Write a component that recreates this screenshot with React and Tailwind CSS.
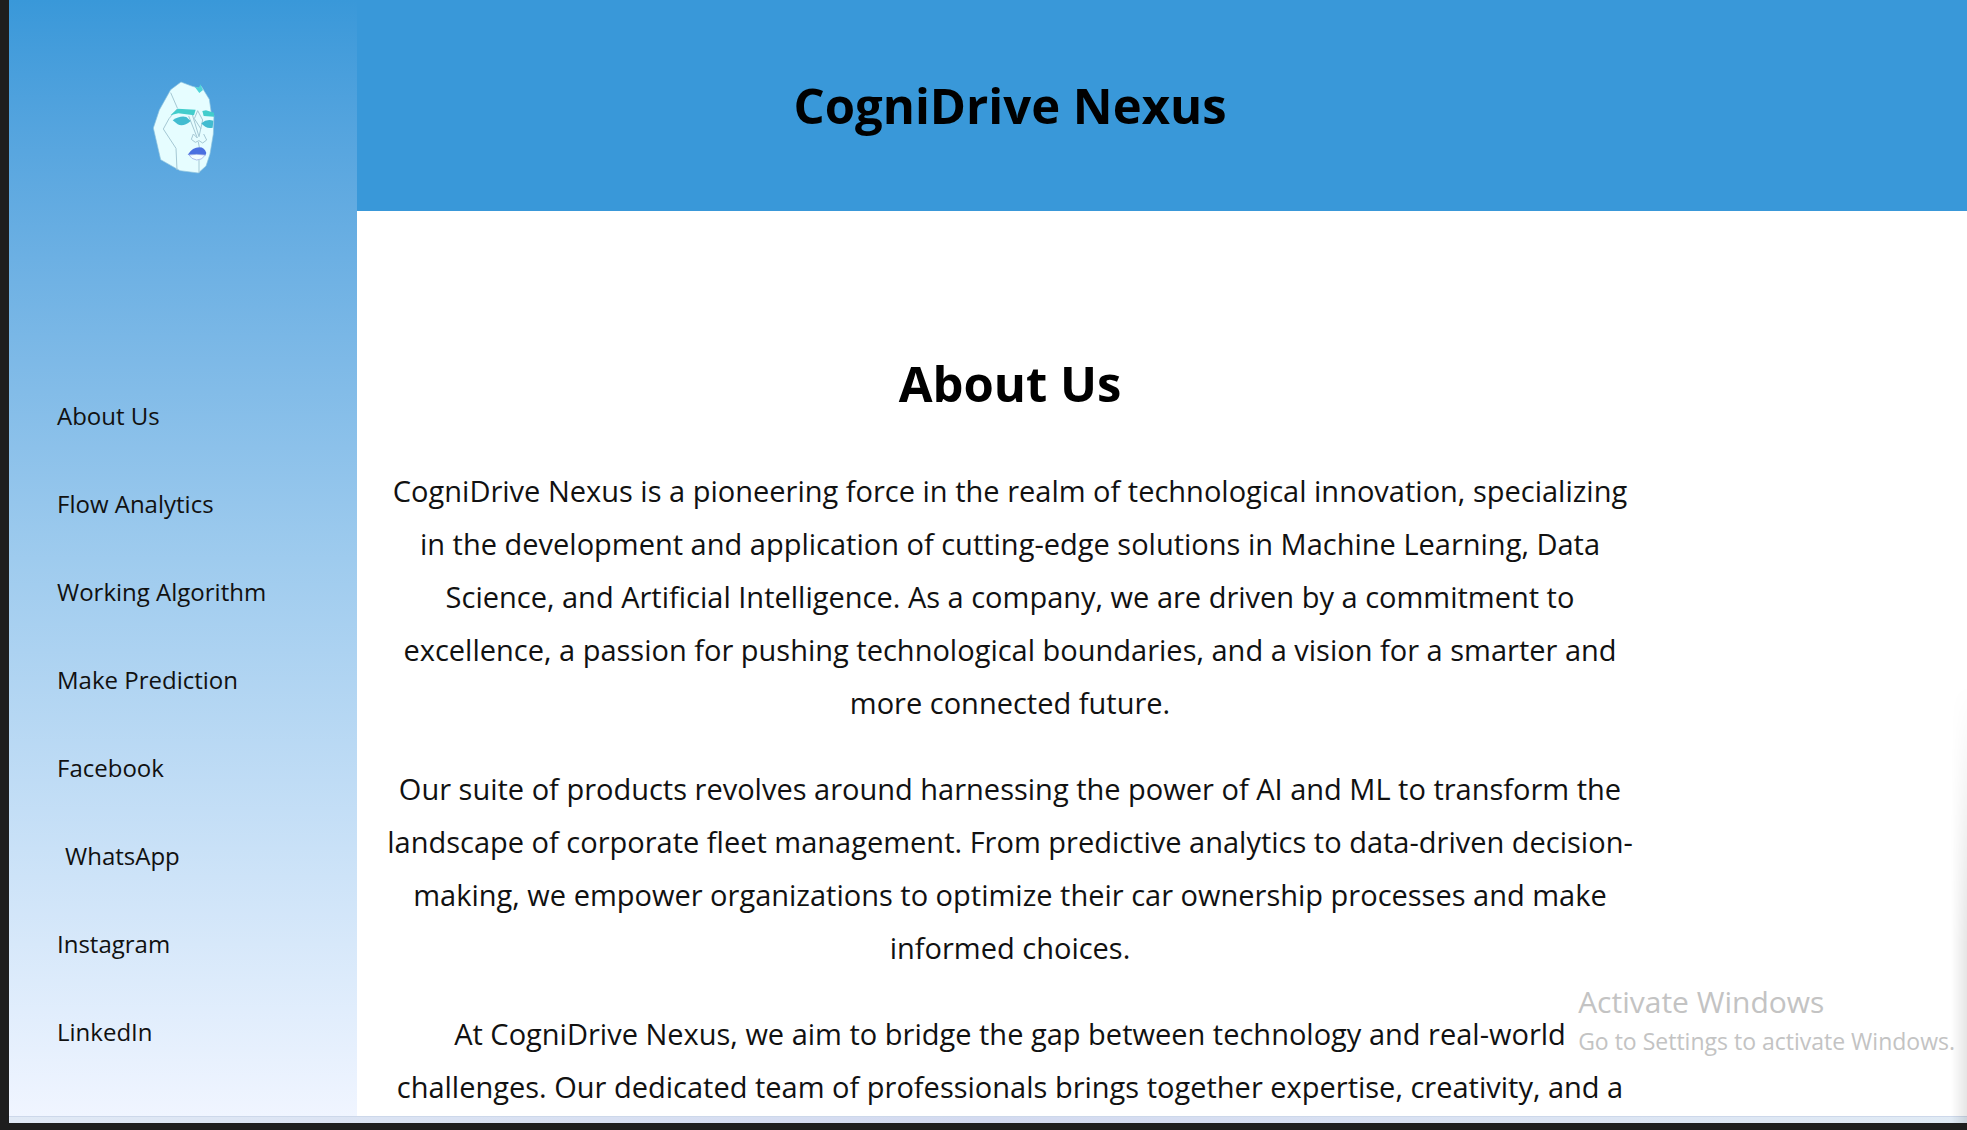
const links = [
  { label: "About Us" },
  { label: "Flow Analytics" },
  { label: "Working Algorithm" },
  { label: "Make Prediction" },
  { label: "Facebook" },
  { label: "WhatsApp", indent: true },
  { label: "Instagram" },
  { label: "LinkedIn" },
];

const paragraphs = [
  "CogniDrive Nexus is a pioneering force in the realm of technological innovation, specializing in the development and application of cutting-edge solutions in Machine Learning, Data Science, and Artificial Intelligence. As a company, we are driven by a commitment to excellence, a passion for pushing technological boundaries, and a vision for a smarter and more connected future.",
  "Our suite of products revolves around harnessing the power of AI and ML to transform the landscape of corporate fleet management. From predictive analytics to data-driven decision-making, we empower organizations to optimize their car ownership processes and make informed choices.",
  "At CogniDrive Nexus, we aim to bridge the gap between technology and real-world challenges. Our dedicated team of professionals brings together expertise, creativity, and a",
];

function FaceLogo() {
  return (
    <svg viewBox="-21 0 360 390" className="h-[130px] w-[120px]" role="img" aria-label="CogniDrive Nexus logo">
      <path d="M153 66 L187 79 L205 84 L214 79 L238 118 L244 160 L252 166 L250 222 L240 282 L228 318 L205 339 L150 332 L92 299 L70 204 L88 150 L122 89 Z" fill="#e6fdff" stroke="#8cc3de" strokeWidth="2" />
      <path d="M194 80 L207 83 L211 73 L219 90 L208 99 Z" fill="#4fd5d8" />
      <g fill="none" stroke="#a5c8d4" strokeWidth="3">
        <path d="M122 98 L142 144" />
        <path d="M142 146 L117 176 L100 207 L138 265 L141 330" />
        <path d="M176 168 L202 234 L190 222 L184 238 L196 247 L207 242 L218 249 L230 240 L221 222" />
        <path d="M187 164 L207 230 L218 180 L203 152 L193 176 L213 207" />
        <path d="M207 300 L207 339 M205 246 L208 262" />
      </g>
      <path d="M121 166 L143 146 L197 149 L192 166 L145 160 Z" fill="#42cdcc" />
      <path d="M217 153 L228 151 L252 158 L252 170 L221 168 Z" fill="#42cdcc" />
      <path d="M128 181 Q150 166 169 171 L182 183 Q160 202 143 193 Z" fill="#42bcd0" />
      <path d="M214 190 Q230 175 250 182 L248 203 Q228 208 214 190 Z" fill="#42bcd0" />
      <path d="M173 284 Q188 262 208 262 Q224 262 229 279 L226 286 L200 284 Z" fill="#4b6fe0" />
      <path d="M177 285 L200 283 L226 285 Q216 301 200 300 Q184 298 177 285 Z" fill="#f4fdff" stroke="#8e9be0" strokeWidth="2" />
    </svg>
  );
}

export default function App() {
  return (
    <div className="relative flex h-screen flex-col overflow-hidden border-b-[7px] border-l-[9px] border-[#1e1e1e] bg-white font-['Open_Sans','Noto_Sans',sans-serif] text-[#111]">
      <div className="flex min-h-0 flex-1">
        <aside className="w-[348px] shrink-0 bg-linear-to-b from-[#3998d9] via-[#9ecbee] to-[#f0f5ff]">
          <div className="flex justify-center pt-[60px]">
            <FaceLogo />
          </div>
          <nav className="mt-[182px] flex flex-col pl-12 text-[24px] leading-[88px]">
            {links.map((l) => (
              <a key={l.label} href="#" className={l.indent ? "pl-2" : ""}>
                {l.label}
              </a>
            ))}
          </nav>
        </aside>
        <div className="flex min-w-0 flex-1 flex-col">
          <header className="flex h-[211px] shrink-0 items-center justify-center bg-[#3998d9] pr-[304px]">
            <h1 className="text-[49px] font-bold text-black">CogniDrive Nexus</h1>
          </header>
          <main className="min-h-0 flex-1 overflow-hidden pr-[304px] pt-[137px] text-center">
            <h2 className="text-[49px] leading-[70px] font-bold text-black">About Us</h2>
            <div className="mx-auto mt-[46px] flex max-w-[1254px] flex-col gap-[33px] text-[29px] leading-[53px]">
              {paragraphs.map((p) => (
                <p key={p}>{p}</p>
              ))}
            </div>
          </main>
        </div>
      </div>
      <footer className="h-[7px] shrink-0 border-t border-[#cdd8ea] bg-linear-to-r from-[#e0e9f5] via-[#d3daf0] to-[#e1ebf5]" />
      <div className="absolute right-0 bottom-0 h-[440px] w-4 bg-linear-to-r from-transparent to-black/10 mask-t-from-40%" />
      <div className="absolute right-3 bottom-16 text-[#c3c3c3]">
        <p className="text-[30px] leading-[42px]">Activate Windows</p>
        <p className="text-[23px] leading-[36px]">Go to Settings to activate Windows.</p>
      </div>
    </div>
  );
}
